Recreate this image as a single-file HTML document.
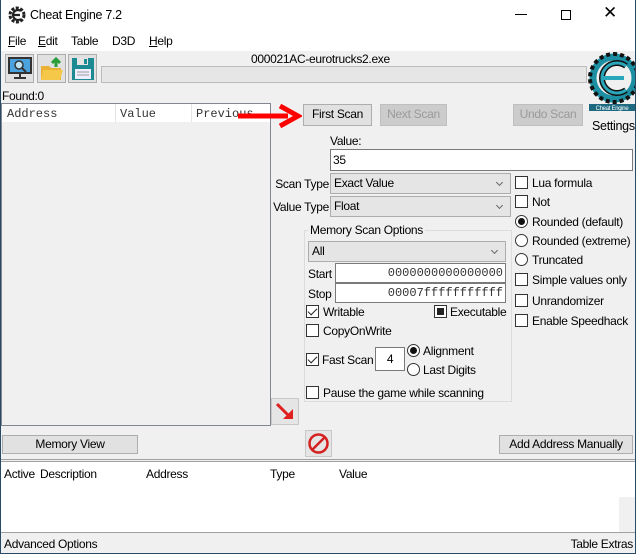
<!DOCTYPE html>
<html><head><meta charset="utf-8"><style>
*{box-sizing:border-box}
body{margin:0;width:636px;height:554px;overflow:hidden;font-family:"Liberation Sans",sans-serif;font-size:12px;letter-spacing:-0.3px;color:#000;background:#f0f0f0;position:relative}
.a{position:absolute;white-space:nowrap}
.t{position:absolute;white-space:nowrap;line-height:14px}
.btn{position:absolute;background:#e1e1e1;border:1px solid #adadad;text-align:center;line-height:19px}
.dis{color:#9a9a9a;background:#cccccc;border-color:#bfbfbf}
.inp{position:absolute;background:#fff;border:1px solid #7a7a7a}
.sel{position:absolute;background:#e5e5e5;border:1px solid #adadad;padding-left:3px;line-height:19px}
.sel:after{content:"";position:absolute;right:8px;top:6px;width:4px;height:4px;border-right:1px solid #666;border-bottom:1px solid #666;transform:rotate(45deg)}
.cb{position:absolute;width:13px;height:13px;background:#fff;border:1px solid #333}
.rd{position:absolute;width:13px;height:13px;background:#fff;border:1px solid #333;border-radius:50%}
.rd.on:after{content:"";position:absolute;left:2px;top:2px;width:7px;height:7px;border-radius:50%;background:#111}
.cb.on:after{content:"";position:absolute;left:3px;top:0px;width:4px;height:8px;border-right:1.5px solid #222;border-bottom:1.5px solid #222;transform:rotate(45deg)}
.mono{font-family:"Liberation Mono",monospace;letter-spacing:0}
</style></head><body>
<div class="a" style="left:0;top:0;width:636px;height:51px;background:#fff"></div>
<svg class="a" style="left:8px;top:6px" width="18" height="18" viewBox="0 0 18 18"><circle cx="9" cy="9" r="7" fill="none" stroke="#222" stroke-width="3" stroke-dasharray="3 1.5"/><path d="M13 5 A5 5 0 1 0 13 13 M6 9 H12" stroke="#222" stroke-width="2.2" fill="none"/></svg>
<div class="t" style="left:30px;top:8px;font-size:12.5px">Cheat Engine 7.2</div>
<div class="a" style="left:515px;top:14px;width:12px;height:1px;background:#000"></div>
<div class="a" style="left:561px;top:10px;width:10px;height:10px;border:1px solid #000"></div>
<div class="t" style="left:603px;top:6px;font-size:17px">✕</div>
<div class="t" style="left:8px;top:34px"><u>F</u>ile</div>
<div class="t" style="left:38px;top:34px"><u>E</u>dit</div>
<div class="t" style="left:71px;top:34px">Table</div>
<div class="t" style="left:112px;top:34px">D3D</div>
<div class="t" style="left:149px;top:34px"><u>H</u>elp</div>
<div class="a" style="left:5px;top:54px;width:29px;height:29px;background:#e1e1e1;border:1px solid #adadad"></div>
<svg class="a" style="left:7px;top:57px" width="26" height="24"><rect x="2" y="1" width="22" height="15" fill="#4aa3df" stroke="#333" stroke-width="2"/><circle cx="12" cy="8" r="4" fill="#bfe3f7" stroke="#333" stroke-width="1.5"/><path d="M15 11 l4 4 M13 16 v4 M7 21 h12" stroke="#333" stroke-width="2"/></svg>
<div class="a" style="left:37px;top:54px;width:29px;height:29px;background:#e1e1e1;border:1px solid #adadad"></div>
<svg class="a" style="left:39px;top:56px" width="26" height="26"><path d="M2 10 h8 l2 2 h10 v12 H2z" fill="#e9b233"/><path d="M4 14 h20 l-3 10 H2z" fill="#f5c84a"/><path d="M17 11 V4 M13 7 l4-4 4 4" stroke="#2a9d3a" stroke-width="3" fill="none"/></svg>
<div class="a" style="left:68px;top:54px;width:29px;height:29px;background:#e1e1e1;border:1px solid #adadad"></div>
<svg class="a" style="left:70px;top:56px" width="26" height="26"><rect x="2" y="2" width="22" height="22" fill="#1c8a93"/><rect x="7" y="2" width="11" height="7" fill="#e5e5e5"/><rect x="14" y="3" width="3" height="5" fill="#1c8a93"/><rect x="5" y="13" width="16" height="10" fill="#eef"/><path d="M7 16h12M7 19h12" stroke="#999"/></svg>
<div class="t" style="left:251px;top:52px">000021AC-eurotrucks2.exe</div>
<div class="a" style="left:101px;top:66px;width:486px;height:17px;background:#e6e6e6;border:1px solid #bcbcbc"></div>
<svg class="a" style="left:588px;top:52px" width="48" height="68" viewBox="0 0 48 68"><circle cx="26" cy="26" r="21" fill="none" stroke="#1d8fa3" stroke-width="7"/><circle cx="26" cy="26" r="24" fill="none" stroke="#111" stroke-width="4" stroke-dasharray="4 3"/><path d="M38 14 A15 15 0 1 0 38 38" fill="none" stroke="#111" stroke-width="6"/><path d="M38 14 A15 15 0 1 0 38 38" fill="none" stroke="#2aa6bb" stroke-width="3"/><path d="M14 26 H36" stroke="#2aa6bb" stroke-width="4"/><rect x="1" y="52" width="46" height="7" fill="#1d6a80"/><text x="24" y="58" font-size="6" fill="#fff" text-anchor="middle" font-family="Liberation Sans">Cheat Engine</text></svg>
<div class="t" style="left:592px;top:119px;font-size:12.5px">Settings</div>
<div class="t" style="left:2px;top:89px">Found:0</div>
<div class="a" style="left:1px;top:103px;width:270px;height:323px;background:#f0f0f0;border:1px solid #828790"></div>
<div class="a" style="left:2px;top:104px;width:268px;height:18px;background:#fff"></div>
<div class="a" style="left:115px;top:104px;width:1px;height:18px;background:#e5e5e5"></div>
<div class="a" style="left:191px;top:104px;width:1px;height:18px;background:#e5e5e5"></div>
<div class="t mono" style="left:7px;top:107px;color:#333">Address</div>
<div class="t mono" style="left:120px;top:107px;color:#333">Value</div>
<div class="t mono" style="left:196px;top:107px;color:#333">Previous</div>
<svg class="a" style="left:238px;top:104px" width="64" height="24"><path d="M0 12 H50" stroke="#f00" stroke-width="5"/><path d="M42 2 L60 12 L42 22" stroke="#f00" stroke-width="5" fill="none"/></svg>
<div class="btn" style="left:303px;top:104px;width:69px;height:22px">First Scan</div>
<div class="btn dis" style="left:380px;top:104px;width:67px;height:22px">Next Scan</div>
<div class="btn dis" style="left:513px;top:104px;width:70px;height:22px">Undo Scan</div>
<div class="t" style="left:330px;top:134px">Value:</div>
<div class="inp" style="left:330px;top:149px;width:303px;height:22px;padding:3px 2px">35</div>
<div class="t" style="right:307px;top:177px">Scan Type</div>
<div class="sel" style="left:330px;top:173px;width:181px;height:21px">Exact Value</div>
<div class="t" style="right:307px;top:200px">Value Type</div>
<div class="sel" style="left:330px;top:196px;width:181px;height:21px">Float</div>
<div class="cb" style="left:515px;top:176px"></div><div class="t" style="left:532px;top:176px">Lua formula</div>
<div class="cb" style="left:515px;top:195px"></div><div class="t" style="left:532px;top:195px">Not</div>
<div class="rd on" style="left:515px;top:215px"></div><div class="t" style="left:532px;top:215px">Rounded (default)</div>
<div class="rd" style="left:515px;top:234px"></div><div class="t" style="left:532px;top:234px">Rounded (extreme)</div>
<div class="rd" style="left:515px;top:253px"></div><div class="t" style="left:532px;top:253px">Truncated</div>
<div class="cb" style="left:515px;top:273px"></div><div class="t" style="left:532px;top:273px">Simple values only</div>
<div class="cb" style="left:515px;top:294px"></div><div class="t" style="left:532px;top:294px">Unrandomizer</div>
<div class="cb" style="left:515px;top:314px"></div><div class="t" style="left:532px;top:314px">Enable Speedhack</div>
<div class="a" style="left:304px;top:230px;width:208px;height:172px;border:1px solid #dcdcdc"></div>
<div class="t" style="left:308px;top:223px;background:#f0f0f0;padding:0 2px">Memory Scan Options</div>
<div class="sel" style="left:308px;top:241px;width:198px;height:21px">All</div>
<div class="t" style="left:308px;top:267px">Start</div>
<div class="inp mono" style="left:335px;top:263px;width:171px;height:20px;text-align:right;padding:2px 2px;font-size:12px;color:#333">0000000000000000</div>
<div class="t" style="left:308px;top:287px">Stop</div>
<div class="inp mono" style="left:335px;top:283px;width:171px;height:20px;text-align:right;padding:2px 2px;font-size:12px;color:#333">00007fffffffffff</div>
<div class="cb on" style="left:306px;top:305px"></div><div class="t" style="left:323px;top:305px">Writable</div>
<div class="cb" style="left:434px;top:305px"></div><div class="a" style="left:437px;top:308px;width:7px;height:7px;background:#222"></div><div class="t" style="left:450px;top:305px">Executable</div>
<div class="cb" style="left:306px;top:324px"></div><div class="t" style="left:323px;top:324px">CopyOnWrite</div>
<div class="cb on" style="left:306px;top:353px"></div><div class="t" style="left:322px;top:353px">Fast Scan</div>
<div class="inp" style="left:375px;top:347px;width:30px;height:24px;text-align:center;line-height:22px">4</div>
<div class="rd on" style="left:407px;top:344px"></div><div class="t" style="left:423px;top:344px">Alignment</div>
<div class="rd" style="left:407px;top:363px"></div><div class="t" style="left:423px;top:363px">Last Digits</div>
<div class="cb" style="left:306px;top:386px"></div><div class="t" style="left:323px;top:386px">Pause the game while scanning</div>
<div class="a" style="left:271px;top:398px;width:28px;height:27px;background:#e5e5e5;border:1px solid #c8c8c8"></div>
<svg class="a" style="left:274px;top:401px" width="22" height="22"><path d="M3 3 L16 16" stroke="#e02020" stroke-width="3"/><path d="M9 18 H19 V8z" fill="#e02020"/></svg>
<div class="btn" style="left:2px;top:435px;width:136px;height:19px;line-height:17px">Memory View</div>
<div class="a" style="left:305px;top:430px;width:27px;height:27px;background:#e5e5e5;border:1px solid #c8c8c8"></div>
<svg class="a" style="left:307px;top:432px" width="23" height="23"><circle cx="11.5" cy="11.5" r="9" fill="none" stroke="#d42020" stroke-width="2.5"/><path d="M5 18 L18 5" stroke="#d42020" stroke-width="2.5"/></svg>
<div class="btn" style="left:499px;top:435px;width:134px;height:19px;line-height:17px">Add Address Manually</div>
<div class="a" style="left:0;top:459px;width:636px;height:3px;border-top:1px solid #a0a0a0;border-bottom:1px solid #a0a0a0"></div>
<div class="a" style="left:1px;top:462px;width:634px;height:71px;background:#fff;border-bottom:1px solid #a0a0a0"></div>
<div class="t" style="left:4px;top:467px">Active</div>
<div class="t" style="left:40px;top:467px">Description</div>
<div class="t" style="left:146px;top:467px">Address</div>
<div class="t" style="left:270px;top:467px">Type</div>
<div class="t" style="left:339px;top:467px">Value</div>
<div class="a" style="left:619px;top:497px;width:16px;height:35px;background:#f0f0f0"></div>
<div class="t" style="left:4px;top:537px">Advanced Options</div>
<div class="t" style="right:3px;top:537px">Table Extras</div>
<div class="a" style="left:0;top:0;width:636px;height:554px;border:1px solid #2b4a66;border-top:none"></div>
</body></html>
